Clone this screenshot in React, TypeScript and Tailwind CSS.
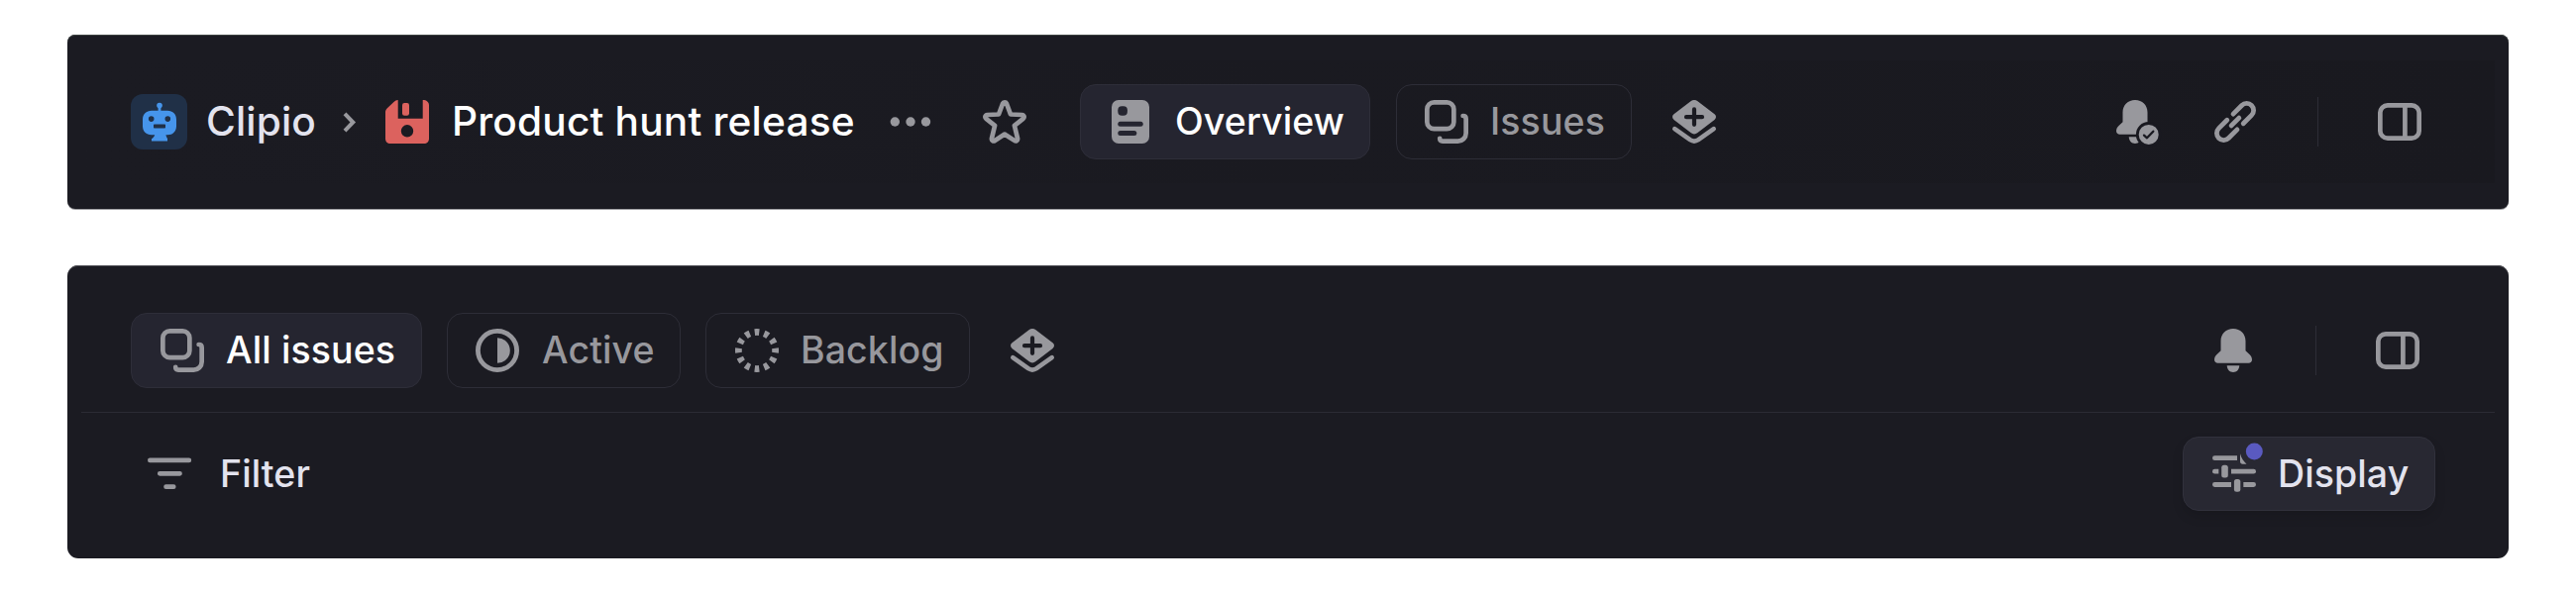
import type { ReactNode } from "react";

type IconProps = { w?: number; h?: number; className?: string; children: ReactNode };

function Icon({ w = 44, h = 44, className = "", children }: IconProps) {
  return (
    <svg width={w} height={h} viewBox={`0 0 ${w} ${h}`} className={`shrink-0 overflow-visible text-[#98989d] ${className}`} fill="none">
      {children}
    </svg>
  );
}

function RobotIcon() {
  return (
    <svg width="57" height="56" viewBox="0 0 57 56" fill="#4695eb">
      <circle cx="29" cy="11.6" r="2.8" />
      <path d="M27.6 12h2.8v6h-2.8z" />
      <path
        fillRule="evenodd"
        d="M21 16.8h16c5.6 0 9 3.6 9 9v6.500c0 5.600-3.600 9-9 9h-1.600c.3 1.500.8 2.700 1.600 3.600v2.700H21v-2.300c1.500-1.100 2.700-2.400 3.200-4H21c-5.600 0-9-3.600-9-9v-6.500c0-5.400 3.600-9 9-9zM20.700 22.300a2.800 2.800 0 1 0 0 5.600a2.800 2.800 0 1 0 0-5.600zM37.300 22.300a2.800 2.800 0 1 0 0 5.600a2.800 2.800 0 1 0 0-5.600zM24 30.500c-.6 0-1 .4-1 1v2c0 .6.4 1 1 1h10c.6 0 1-.4 1-1v-2c0-.6-.4-1-1-1z"
      />
    </svg>
  );
}

function DiskIcon({ className }: { className?: string }) {
  return (
    <Icon className={className}>
      <path
        fill="#dc625e"
        fillRule="evenodd"
        d="M12.700 0v18.700h25V0C41.500 0 44 2 44 5.300V39c0 3-2 5-5 5H5c-3 0-5-2-5-5V12.500c0-1.800.6-3 1.900-4.200L8.500 2C9.800.7 11 0 12.700 0zM22 25.100a6.200 6.200 0 1 0 0 12.400a6.200 6.200 0 1 0 0-12.400z"
      />
      <rect x="17" y="3" width="7" height="12.700" rx="2.200" fill="#dc625e" />
    </Icon>
  );
}

function StarIcon({ className }: { className?: string }) {
  return (
    <Icon className={className}>
      <path
        stroke="currentColor"
        strokeWidth="4.700"
        strokeLinejoin="round"
        d="M20 3.700C20.700 2 23.300 2 24 3.700L28 14.500L39.500 15C41.700 15.200 42.300 17.600 40.700 18.800L31.900 25.800L35 38.600C35.500 40.700 33.500 42 31.800 40.900L22 34.600L12.200 40.900C10.500 42 8.500 40.700 9 38.600L12.100 25.800L3.300 18.800C1.700 17.600 2.300 15.200 4.500 15L16 14.500Z"
      />
    </Icon>
  );
}

function DocIcon() {
  return (
    <Icon w={38}>
      <rect width="38" height="44" rx="7" fill="currentColor" />
      <g fill="#252530">
        <rect x="6.300" y="6.200" width="9.600" height="9.600" rx="4" />
        <rect x="6.300" y="21.700" width="25.400" height="5" rx="2.500" />
        <rect x="6.300" y="31" width="19" height="5" rx="2.500" />
      </g>
    </Icon>
  );
}

function CopyIcon() {
  return (
    <Icon>
      <g stroke="currentColor" strokeWidth="4.700" strokeLinecap="round">
        <rect x="2.350" y="2.350" width="27" height="26.800" rx="7" />
        <path d="M38.600 16C40.600 16 41.650 17 41.650 19V33.500A8.150 8.150 0 0 1 33.500 41.650H18C16 41.650 15.200 40.700 15.200 38.800" />
      </g>
    </Icon>
  );
}

function LayersPlusIcon({ className }: { className?: string }) {
  return (
    <Icon className={className}>
      <path
        fill="currentColor"
        d="M18.500 1.300C20.700-.4 23.300-.4 25.500 1.300L42.500 14.300C44.500 15.900 44.500 18.300 42.500 19.900L25.500 33.100C23.300 34.800 20.700 34.800 18.500 33.100L1.500 19.900C-.5 18.300-.5 15.900 1.500 14.300Z"
      />
      <path stroke="#1b1b22" strokeWidth="4.200" strokeLinecap="round" d="M22 9.400V24.800M14 17.200H30" />
      <path stroke="currentColor" strokeWidth="4.600" strokeLinecap="round" d="M2.300 29.200L17.800 40.200C20.800 42.200 23.200 42.200 26.200 40.200L41.700 29.200" />
    </Icon>
  );
}

const BELL =
  "M19 0C11.800 0 6.500 5.200 6.500 12.500V22.300L2.500 26C.8 27.500 0 29.500 0 31.300C0 33.300 1.500 34.700 3.500 34.700H34.500C36.500 34.700 38 33.300 38 31.300C38 29.500 37.200 27.500 35.500 26L31.500 22.300V12.500C31.500 5.200 26.200 0 19 0ZM12.700 37.300H25.300C25 41.500 22.500 44 19 44S13 41.500 12.700 37.300Z";

function BellIcon({ className }: { className?: string }) {
  return (
    <Icon w={38} className={className}>
      <path d={BELL} fill="currentColor" />
    </Icon>
  );
}

function BellCheckIcon({ className }: { className?: string }) {
  return (
    <Icon w={43} className={className}>
      <path d={BELL} fill="currentColor" />
      <circle cx="32.700" cy="34.900" r="12.800" fill="#191920" />
      <circle cx="32.700" cy="34.900" r="10" fill="currentColor" />
      <path d="M28 35.600L31 38.300L37.300 31.700" stroke="#191920" strokeWidth="2.300" strokeLinecap="round" strokeLinejoin="round" />
    </Icon>
  );
}

function LinkIcon({ className }: { className?: string }) {
  return (
    <Icon w={42} h={42} className={className}>
      <g transform="translate(21 21) rotate(-45)" stroke="currentColor" strokeWidth="4.800" strokeLinecap="round">
        <path d="M4.200-7H16.400A7 7 0 0 1 16.400 7H4.600" />
        <path d="M-4.200 7H-16.400A7 7 0 0 1-16.400-7H-4.600" />
        <path d="M-5.500 0H5.500" />
      </g>
    </Icon>
  );
}

function SidebarIcon({ className }: { className?: string }) {
  return (
    <Icon h={38} className={className}>
      <g stroke="currentColor" strokeWidth="4.700">
        <rect x="2.350" y="2.350" width="39.300" height="33.300" rx="7.500" />
        <path d="M27.400 2V36" />
      </g>
    </Icon>
  );
}

function HalfCircleIcon() {
  return (
    <Icon>
      <circle cx="22" cy="22" r="19.600" stroke="currentColor" strokeWidth="4.800" />
      <path d="M22 9.200A12.800 12.800 0 0 1 22 34.800Z" fill="currentColor" />
    </Icon>
  );
}

function DashedCircleIcon() {
  return (
    <Icon>
      <circle cx="22" cy="22" r="18.600" pathLength="360" stroke="currentColor" strokeWidth="6.800" strokeDasharray="14.500 15.500" strokeDashoffset="7.250" />
    </Icon>
  );
}

function FilterIcon() {
  return (
    <Icon h={33}>
      <path stroke="currentColor" strokeWidth="4.800" strokeLinecap="round" d="M2.400 2.900H41.800M12.300 16.300H32.500M18.600 29.700H26.200" />
    </Icon>
  );
}

function SlidersIcon() {
  return (
    <Icon h={37}>
      <g fill="currentColor">
        <path d="M2.400 .3H25V5.100H2.400A2.400 2.400 0 0 1 2.400.3Z" />
        <path d="M28-1.700C29.300 2.900 31.500 6 34.500 8.700H30.500C29 8.700 28 7.700 28 6.200Z" />
        <path d="M2.400 13.800H6.300V18.600H2.400A2.400 2.400 0 0 1 2.400 13.800Z" />
        <rect x="9.200" y="9.800" width="6.600" height="12.800" rx="2.500" />
        <path d="M19 13.800H41.600A2.400 2.400 0 0 1 41.600 18.600H19Z" />
        <path d="M2.400 27.100H19V31.900H2.400A2.400 2.400 0 0 1 2.400 27.100Z" />
        <rect x="21.900" y="24" width="6.400" height="12.700" rx="2.500" />
        <path d="M31.300 27.100H41.600A2.400 2.400 0 0 1 41.600 31.900H31.300Z" />
      </g>
      <circle cx="42.300" cy="-4" r="8.500" fill="#5a5ac0" />
    </Icon>
  );
}

type TabProps = { icon: ReactNode; label: string; active?: boolean; className: string };

function Tab({ icon, label, active, className }: TabProps) {
  return (
    <button
      className={`flex h-[76px] shrink-0 items-center rounded-[16px] border text-[37.5px] leading-[48px] tracking-[0.1px] whitespace-nowrap ${
        active ? "border-[#2e2e39] bg-[#252530] text-white" : "border-[#2d2d37] text-[#98989d]"
      } ${className}`}
    >
      {icon}
      <span>{label}</span>
    </button>
  );
}

export default function App() {
  return (
    <main className="h-[601px] w-[2600px] bg-white px-[68px] pt-[35px] font-['Inter',sans-serif] font-medium">
      <header className="h-[176px] rounded-[8px] bg-[#1b1b22] px-[14px] py-[26px] shadow-[0_1px_0_#a0a0a4,inset_0_1px_0_#3c4240]">
        <div className="flex h-[124px] items-center bg-linear-to-r from-[#1b1b22] to-[#19191f] pl-[50px]">
          <span className="flex h-[56px] w-[57px] shrink-0 rounded-[12px] bg-[#203047]">
            <RobotIcon />
          </span>
          <span className="ml-[19px] w-[138px] shrink-0 text-[40.625px] leading-[48px] tracking-[0.15px] whitespace-nowrap text-[#e3e3ee]">Clipio</span>
          <Icon w={13} h={21} className="text-[#8e8e93]">
            <path d="M2 1.800L10.300 10.500L2 19.200" stroke="currentColor" strokeWidth="4" />
          </Icon>
          <DiskIcon className="ml-[30px]" />
          <span className="ml-[23px] w-[442px] shrink-0 text-[40.625px] leading-[48px] tracking-[0.18px] whitespace-nowrap text-white">Product hunt release</span>
          <Icon w={42} h={10}>
            <g fill="currentColor">
              <circle cx="5.300" cy="5" r="4.700" />
              <circle cx="21" cy="5" r="4.700" />
              <circle cx="36.500" cy="5" r="4.700" />
            </g>
          </Icon>
          <StarIcon className="ml-[52px]" />
          <Tab className="ml-[54px] w-[293px] gap-[26px] pl-[31px]" active icon={<DocIcon />} label="Overview" />
          <Tab className="ml-[26px] w-[238px] gap-[22px] pl-[28px]" icon={<CopyIcon />} label="Issues" />
          <LayersPlusIcon className="ml-[41px]" />
          <div className="mr-[74px] ml-auto flex items-center">
            <BellCheckIcon />
            <LinkIcon className="ml-[56px]" />
            <span className="ml-[62px] h-[50px] w-px bg-[#2d2d37]" />
            <SidebarIcon className="ml-[60px]" />
          </div>
        </div>
      </header>

      <section className="mt-[57px] h-[296px] rounded-[11px] bg-[#1b1b22] px-[14px] pt-[48px] shadow-[inset_0_1px_0_#4a4a51]">
        <div className="flex h-[101px] items-start border-b border-[#2b2b34] pl-[50px]">
          <Tab className="w-[294px] gap-[22px] pl-[29px]" active icon={<CopyIcon />} label="All issues" />
          <Tab className="ml-[25px] w-[236px] gap-[23px] pl-[28px]" icon={<HalfCircleIcon />} label="Active" />
          <Tab className="ml-[25px] w-[267px] gap-[22px] pl-[29px]" icon={<DashedCircleIcon />} label="Backlog" />
          <LayersPlusIcon className="mt-[16px] ml-[41px]" />
          <div className="mr-[76px] ml-auto flex h-[76px] items-center">
            <BellIcon />
            <span className="ml-[64px] h-[50px] w-px bg-[#2d2d37]" />
            <SidebarIcon className="ml-[60px]" />
          </div>
        </div>
        <div className="flex h-[123px] items-center justify-between pr-[60px] pl-[67px] text-[37.5px] leading-[48px] tracking-[0.1px] text-[#e3e3ee]">
          <button className="flex items-center gap-[29px]">
            <FilterIcon />
            <span>Filter</span>
          </button>
          <button className="flex h-[75px] w-[255px] items-center gap-[22px] rounded-[16px] border border-[#31313c] bg-[#282832] pl-[29px] shadow-[0_6px_12px_rgba(0,0,0,0.12)]">
            <SlidersIcon />
            <span>Display</span>
          </button>
        </div>
      </section>
    </main>
  );
}
